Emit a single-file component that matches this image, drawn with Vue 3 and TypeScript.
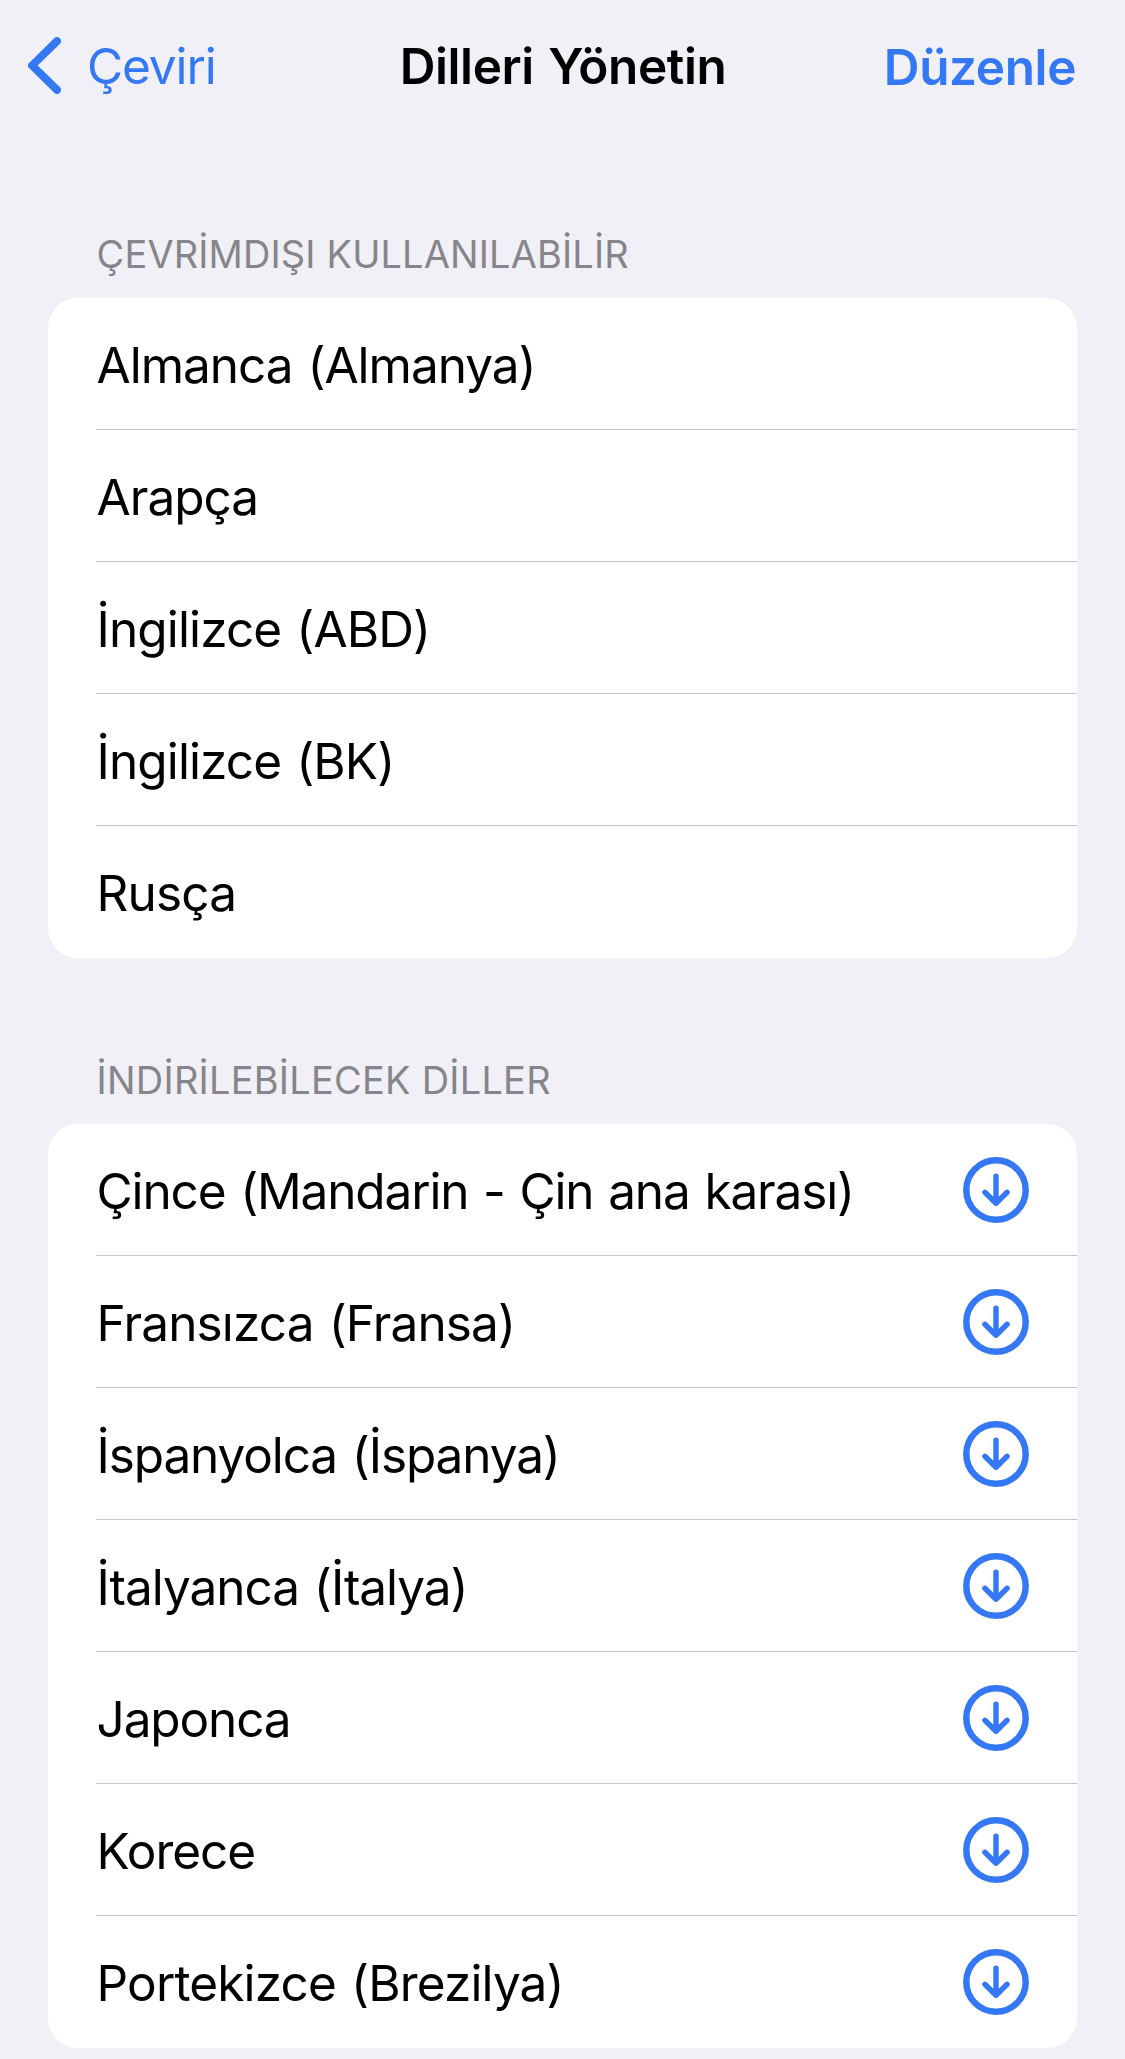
<script setup lang="ts">
interface Language {
  name: string
  tracking: number
}
interface Section {
  title: string
  tracking: number
  downloadable: boolean
  languages: Language[]
}

const sections: Section[] = [
  {
    title: 'ÇEVRİMDIŞI KULLANILABİLİR',
    tracking: 0.17,
    downloadable: false,
    languages: [
      { name: 'Almanca (Almanya)', tracking: -1.02 },
      { name: 'Arapça', tracking: -1 },
      { name: 'İngilizce (ABD)', tracking: -0.88 },
      { name: 'İngilizce (BK)', tracking: -0.9 },
      { name: 'Rusça', tracking: -0.85 },
    ],
  },
  {
    title: 'İNDİRİLEBİLECEK DİLLER',
    tracking: 0.27,
    downloadable: true,
    languages: [
      { name: 'Çince (Mandarin - Çin ana karası)', tracking: -1.15 },
      { name: 'Fransızca (Fransa)', tracking: -0.86 },
      { name: 'İspanyolca (İspanya)', tracking: -1.12 },
      { name: 'İtalyanca (İtalya)', tracking: -1.03 },
      { name: 'Japonca', tracking: -1.15 },
      { name: 'Korece', tracking: -1.04 },
      { name: 'Portekizce (Brezilya)', tracking: -0.86 },
    ],
  },
]
</script>

<template>
  <main class="screen">
    <header class="nav">
      <a class="back">
        <svg class="chevron" width="33" height="57" viewBox="0 0 33 57" fill="none">
          <path d="M29 4.1 4.1 28.5 29 52.9" stroke="currentColor" stroke-width="8" stroke-linecap="round" stroke-linejoin="round" />
        </svg>
        <span class="back-label">Çeviri</span>
      </a>
      <h1 class="title">Dilleri Yönetin</h1>
      <a class="edit">Düzenle</a>
    </header>

    <section v-for="section in sections" :key="section.title">
      <h2 class="heading" :style="{ letterSpacing: section.tracking + 'px' }">{{ section.title }}</h2>
      <ul class="card">
        <li v-for="language in section.languages" :key="language.name" class="row">
          <span class="name" :style="{ letterSpacing: language.tracking + 'px' }">{{ language.name }}</span>
          <svg v-if="section.downloadable" class="download" width="66" height="66" viewBox="-33 -33 66 66" fill="none" stroke="currentColor" stroke-linecap="round" stroke-linejoin="round">
            <circle r="29.7" stroke-width="6.5" />
            <path d="M0-13.8V13M-11.1 2.3 0 13.2 11.1 2.3" stroke-width="5.4" />
          </svg>
        </li>
      </ul>
    </section>
  </main>
</template>

<style>
body {
  background: #f1f0f6;
}
</style>

<style scoped>
.screen {
  min-height: 2059px;
  background: #f1f0f6;
  color: #000;
  font-family: Inter, "Liberation Sans", sans-serif;
  font-size: 49.5px;
}

.nav {
  display: grid;
  grid-template-columns: 1fr auto 1fr;
  align-items: center;
  height: 132px;
  line-height: 60px;
}

.back {
  display: flex;
  align-items: center;
  gap: 26px;
  padding-left: 28px;
  color: #3478f6;
}

.chevron {
  display: block;
  margin-bottom: 1px;
}

.back-label {
  letter-spacing: -1.1px;
}

.title {
  margin: 0;
  padding-left: 1px;
  font-size: inherit;
  font-weight: 600;
  letter-spacing: -0.4px;
  word-spacing: 2.4px;
}

.edit {
  padding: 2px 49px 0 0;
  color: #3478f6;
  font-weight: 600;
  letter-spacing: -0.4px;
  text-align: right;
}

.heading {
  box-sizing: border-box;
  height: 166px;
  margin: 0;
  padding: 99px 0 0 96.6px;
  color: #86858b;
  font-size: 37.9px;
  font-weight: 400;
  line-height: 46px;
}

.card {
  margin: 0 48px;
  padding: 0;
  overflow: hidden;
  border-radius: 30px;
  background: #fff;
  list-style: none;
}

.row {
  display: flex;
  align-items: center;
  justify-content: space-between;
  height: 132px;
  margin-left: 48px;
  padding-right: 48px;
  box-shadow: inset 0 -1px #c6c6c8;
}

.row:last-child {
  box-shadow: none;
}

.name {
  padding: 2px 0 0 0.6px;
  line-height: 60px;
  white-space: nowrap;
  word-spacing: 2px;
}

.download {
  display: block;
  flex: none;
  color: #3478f6;
}
</style>
